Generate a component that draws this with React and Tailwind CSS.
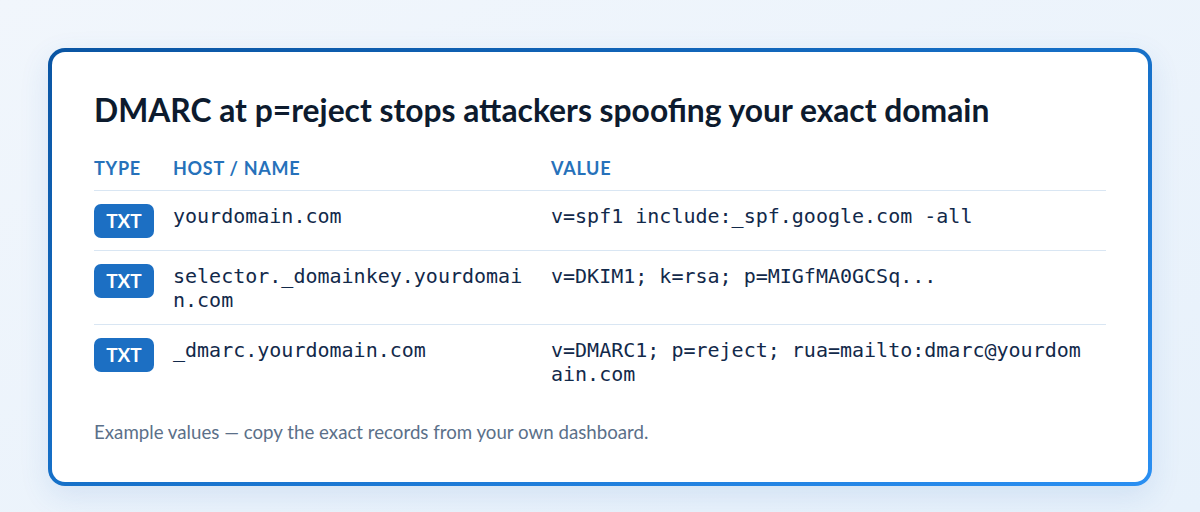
const records = [
  { type: 'TXT', host: 'yourdomain.com', value: 'v=spf1 include:_spf.google.com -all' },
  { type: 'TXT', host: 'selector._domainkey.yourdomain.com', value: 'v=DKIM1; k=rsa; p=MIGfMA0GCSq...' },
  { type: 'TXT', host: '_dmarc.yourdomain.com', value: 'v=DMARC1; p=reject; rua=mailto:dmarc@yourdomain.com' },
]

const sans = { fontFamily: '"Lato", "Noto Sans", sans-serif' }

export default function App() {
  return (
    <div className="h-[512px] w-[1200px] bg-linear-to-br from-[#f1f6fc] to-[#e7f1fb] pl-[48px] pt-[48px]">
      {/* gradient frame */}
      <div className="w-[1104px] rounded-[17px] bg-linear-to-br from-[#0a55a3] via-[#1670c8] to-[#2a8ff2] p-[4px] shadow-[0_10px_30px_rgba(40,110,190,0.12)]">
        <div className="h-[430px] rounded-[13px] bg-white px-[42px] pt-[40px]" style={sans}>
          <h1 className="text-[31.8px] font-bold leading-[36px] text-[#0d1b2e]">
            DMARC at p=reject stops attackers spoofing your exact domain
          </h1>

          <div className="mt-[28px]">
            <div className="grid grid-cols-[79px_378px_1fr] border-b border-[#d9e6f3] pb-[10px] text-[18px] font-bold uppercase leading-[24px] tracking-[0.04em] text-[#2671ba]">
              <div>Type</div>
              <div>Host / Name</div>
              <div>Value</div>
            </div>

            {records.map((r, i) => (
              <div
                key={r.host}
                className={`grid grid-cols-[79px_378px_1fr] pt-[13px] pb-[12px] ${i < records.length - 1 ? 'border-b border-[#d9e6f3]' : ''}`}
              >
                <div>
                  <span className="inline-flex h-[34px] w-[60px] items-center justify-center rounded-[7px] bg-[#1c6fc3] text-[19px] font-bold text-white">
                    {r.type}
                  </span>
                </div>
                <div className="break-all pr-[20px] font-['DejaVu_Sans_Mono',monospace] text-[20px] leading-[24px] text-[#12294a]">
                  {r.host}
                </div>
                <div className="break-all pr-[20px] font-['DejaVu_Sans_Mono',monospace] text-[20px] leading-[24px] text-[#12294a]">
                  {r.value}
                </div>
              </div>
            ))}
          </div>

          <p className="mt-[22px] text-[18.7px] leading-[24px] text-[#5b7089]">
            Example values — copy the exact records from your own dashboard.
          </p>
        </div>
      </div>
    </div>
  )
}
